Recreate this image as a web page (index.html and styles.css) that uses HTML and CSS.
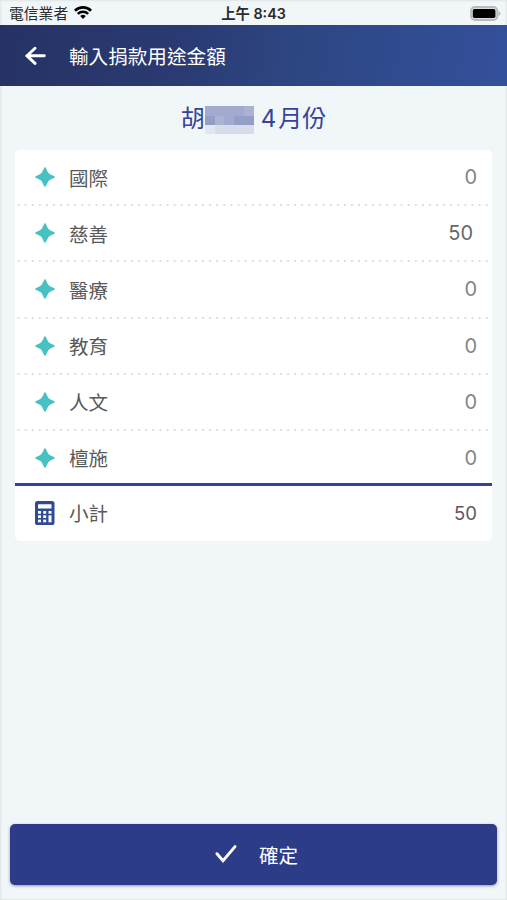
FILE: index.html
```html
<!DOCTYPE html>
<html lang="zh-TW">
<head>
    <meta charset="UTF-8">
    <meta name="viewport" content="width=device-width, initial-scale=1.0">
    <title>輸入捐款用途金額</title>
    <link rel="stylesheet" href="styles.css">
</head>
<body>
    <svg width="0" height="0" class="symbols">
        <symbol id="star" viewBox="0 0 20 20">
            <path d="M10 0 C11 0.4 11.8 3.6 13.2 5.6 C13.5 6.1 13.9 6.5 14.4 6.8 C16.4 8.2 19.6 9 20 10 C19.6 11 16.4 11.8 14.4 13.2 C13.9 13.5 13.5 13.9 13.2 14.4 C11.8 16.4 11 19.6 10 20 C9 19.6 8.2 16.4 6.8 14.4 C6.5 13.9 6.1 13.5 5.6 13.2 C3.6 11.8 0.4 11 0 10 C0.4 9 3.6 8.2 5.6 6.8 C6.1 6.5 6.5 6.1 6.8 5.6 C8.2 3.6 9 0.4 10 0 Z" fill="#47c1c1"/>
        </symbol>
    </svg>

    <div class="status-bar">
        <div class="carrier">
            <span>電信業者</span>
            <svg class="wifi" width="18" height="13" viewBox="0 0 18 13">
                <path d="M0.9 4.7 A11.6 11.6 0 0 1 17.1 4.7" fill="none" stroke="#000" stroke-width="2.6"/>
                <path d="M3.8 7.8 A7.5 7.5 0 0 1 14.2 7.8" fill="none" stroke="#000" stroke-width="2.4"/>
                <path d="M9 13 L6.2 10.1 A4 4 0 0 1 11.8 10.1 Z" fill="#000"/>
            </svg>
        </div>
        <div class="time">上午 8:43</div>
        <svg class="battery" width="31" height="15" viewBox="0 0 31 15">
            <rect x="1" y="1" width="26.4" height="13" rx="4" fill="#d9dbdc" stroke="#b8babb" stroke-width="1.8"/>
            <rect x="2.8" y="3" width="22.6" height="9" rx="1.8" fill="#000"/>
            <path d="M28.6 5 Q30.4 5.6 30.4 7.5 Q30.4 9.4 28.6 10 Z" fill="#b4b6b7"/>
        </svg>
    </div>

    <header class="header">
        <svg class="back" width="22" height="20" viewBox="0 0 22 20">
            <path d="M19.3 9.8 H2 M10 2.2 L2 9.8 L10 17.4" fill="none" stroke="#fff" stroke-width="2.9" stroke-linecap="round"/>
        </svg>
        <h1>輸入捐款用途金額</h1>
    </header>

    <main class="content">
        <h2 class="title">
            <span>胡</span>
            <span class="mosaic">
                <i class="m1"></i><i class="m1"></i><i class="m1"></i><i class="m1"></i><i class="m2"></i>
                <i class="m3"></i><i class="m2"></i><i class="m1"></i><i class="m3"></i><i class="m3"></i>
                <i class="m5"></i><i class="m4"></i><i class="m4"></i><i class="m4"></i><i class="m4"></i>
            </span>
            <span><span class="digit">4</span>月份</span>
        </h2>

        <div class="card">
            <div class="row">
                <svg class="icon"><use href="#star"/></svg>
                <span class="label">國際</span>
                <span class="amount">0</span>
            </div>
            <div class="row">
                <svg class="icon"><use href="#star"/></svg>
                <span class="label">慈善</span>
                <span class="amount filled">50</span>
            </div>
            <div class="row">
                <svg class="icon"><use href="#star"/></svg>
                <span class="label">醫療</span>
                <span class="amount">0</span>
            </div>
            <div class="row">
                <svg class="icon"><use href="#star"/></svg>
                <span class="label">教育</span>
                <span class="amount">0</span>
            </div>
            <div class="row">
                <svg class="icon"><use href="#star"/></svg>
                <span class="label">人文</span>
                <span class="amount">0</span>
            </div>
            <div class="row last">
                <svg class="icon"><use href="#star"/></svg>
                <span class="label">檀施</span>
                <span class="amount">0</span>
            </div>
            <div class="row total">
                <svg class="calc" width="20" height="24" viewBox="0 0 20 24">
                    <rect x="0" width="19.5" height="24" rx="2.6" fill="#2f4a97"/>
                    <rect x="3" y="3.2" width="13.5" height="4.4" rx="0.6" fill="#fff"/>
                    <g fill="#fff">
                        <rect x="3" y="10" width="3" height="2.7"/>
                        <rect x="8.2" y="10" width="3" height="2.7"/>
                        <rect x="13.5" y="10" width="3" height="2.7"/>
                        <rect x="3" y="14.3" width="3" height="2.7"/>
                        <rect x="8.2" y="14.3" width="3" height="2.7"/>
                        <rect x="3" y="18.6" width="3" height="2.7"/>
                        <rect x="8.2" y="18.6" width="3" height="2.7"/>
                        <rect x="13.5" y="14.3" width="3" height="7"/>
                    </g>
                </svg>
                <span class="label">小計</span>
                <span class="amount">50</span>
            </div>
        </div>
    </main>

    <button class="confirm">
        <svg width="22" height="20" viewBox="0 0 22 20">
            <path d="M2 9.7 L8 16.8 L20 2.6" fill="none" stroke="#fff" stroke-width="2.9" stroke-linecap="round"/>
        </svg>
        <span>確定</span>
    </button>
</body>
</html>
```
FILE: styles.css
```css
* {
    box-sizing: border-box;
}
body {
    margin: 0;
    height: 900px;
    display: flex;
    flex-direction: column;
    background: #f1f6f9;
    box-shadow: inset 0 0 2px 1px #dfe4e7;
    font-family: Inter, "Noto Sans CJK TC", sans-serif;
    color: #58595b;
    overflow: hidden;
}
.symbols {
    position: absolute;
}
.status-bar {
    height: 25px;
    display: grid;
    grid-template-columns: 1fr auto 1fr;
    align-items: center;
    padding: 2px 6px 0 9px;
    font-size: 14.8px;
    line-height: 22px;
    color: #2b2b2b;
}
.carrier {
    display: flex;
    align-items: center;
    gap: 6px;
}
.carrier .wifi {
    margin-bottom: 2px;
}
.time {
    margin-right: 3px;
    font-size: 14.3px;
    font-weight: 600;
}
.battery {
    justify-self: end;
    margin-bottom: 1px;
}
.header {
    height: 61px;
    display: flex;
    align-items: center;
    padding-left: 25px;
    background: linear-gradient(100deg, #263263 0%, #2a3a72 35%, #2d4784 60%, #34509b 100%);
    color: #fff;
}
.header h1 {
    margin: 0 0 1px 22px;
    font-size: 19.6px;
    font-weight: 400;
}
.content {
    flex: 1;
    padding: 0 15px;
}
.title {
    height: 64px;
    margin: 0;
    padding-bottom: 3px;
    display: flex;
    justify-content: center;
    align-items: center;
    font-size: 24px;
    font-weight: 400;
    color: #35449a;
}
.digit {
    margin-right: 2px;
}
.mosaic {
    display: grid;
    grid-template-columns: repeat(5, 1fr);
    grid-template-rows: 10px 9px 9px;
    width: 49px;
    height: 28px;
    margin: 7px 7px 0 0;
}
.m1 { background: #a2aacf; }
.m2 { background: #abb3d4; }
.m3 { background: #949fc8; }
.m4 { background: #d7dcea; }
.m5 { background: #e1e6f0; }
.card {
    background: #fff;
    border-radius: 5px;
}
.row {
    height: 56.2px;
    display: flex;
    align-items: center;
    padding: 0 15px 2px 20px;
    background: radial-gradient(circle, #dedede 0.9px, transparent 1.5px) 0 100% / 7.1px 2px repeat-x;
}
.icon {
    width: 20px;
    height: 20px;
}
.label {
    margin-left: 14px;
    font-size: 19.5px;
}
.amount {
    margin-left: auto;
    font-size: 20px;
    color: #858585;
}
.amount.filled {
    margin-right: 4px;
    color: #686868;
}
.row.last {
    height: 55px;
    padding-top: 2px;
    padding-bottom: 0;
    border-bottom: 3px solid #35438f;
    background: none;
}
.row.total {
    height: 55px;
    padding-bottom: 1px;
    background: none;
}
.total .amount {
    font-size: 18.5px;
    color: #58595b;
}
.confirm {
    height: 61px;
    margin: 0 10px 15px;
    padding: 0 0 1px 6px;
    display: flex;
    justify-content: center;
    align-items: center;
    gap: 22px;
    border: none;
    border-radius: 5px;
    background: #2c3c88;
    box-shadow: 0 1px 3px rgba(40, 50, 100, 0.5);
    color: #fff;
    font-family: inherit;
    font-size: 19.5px;
}
```
